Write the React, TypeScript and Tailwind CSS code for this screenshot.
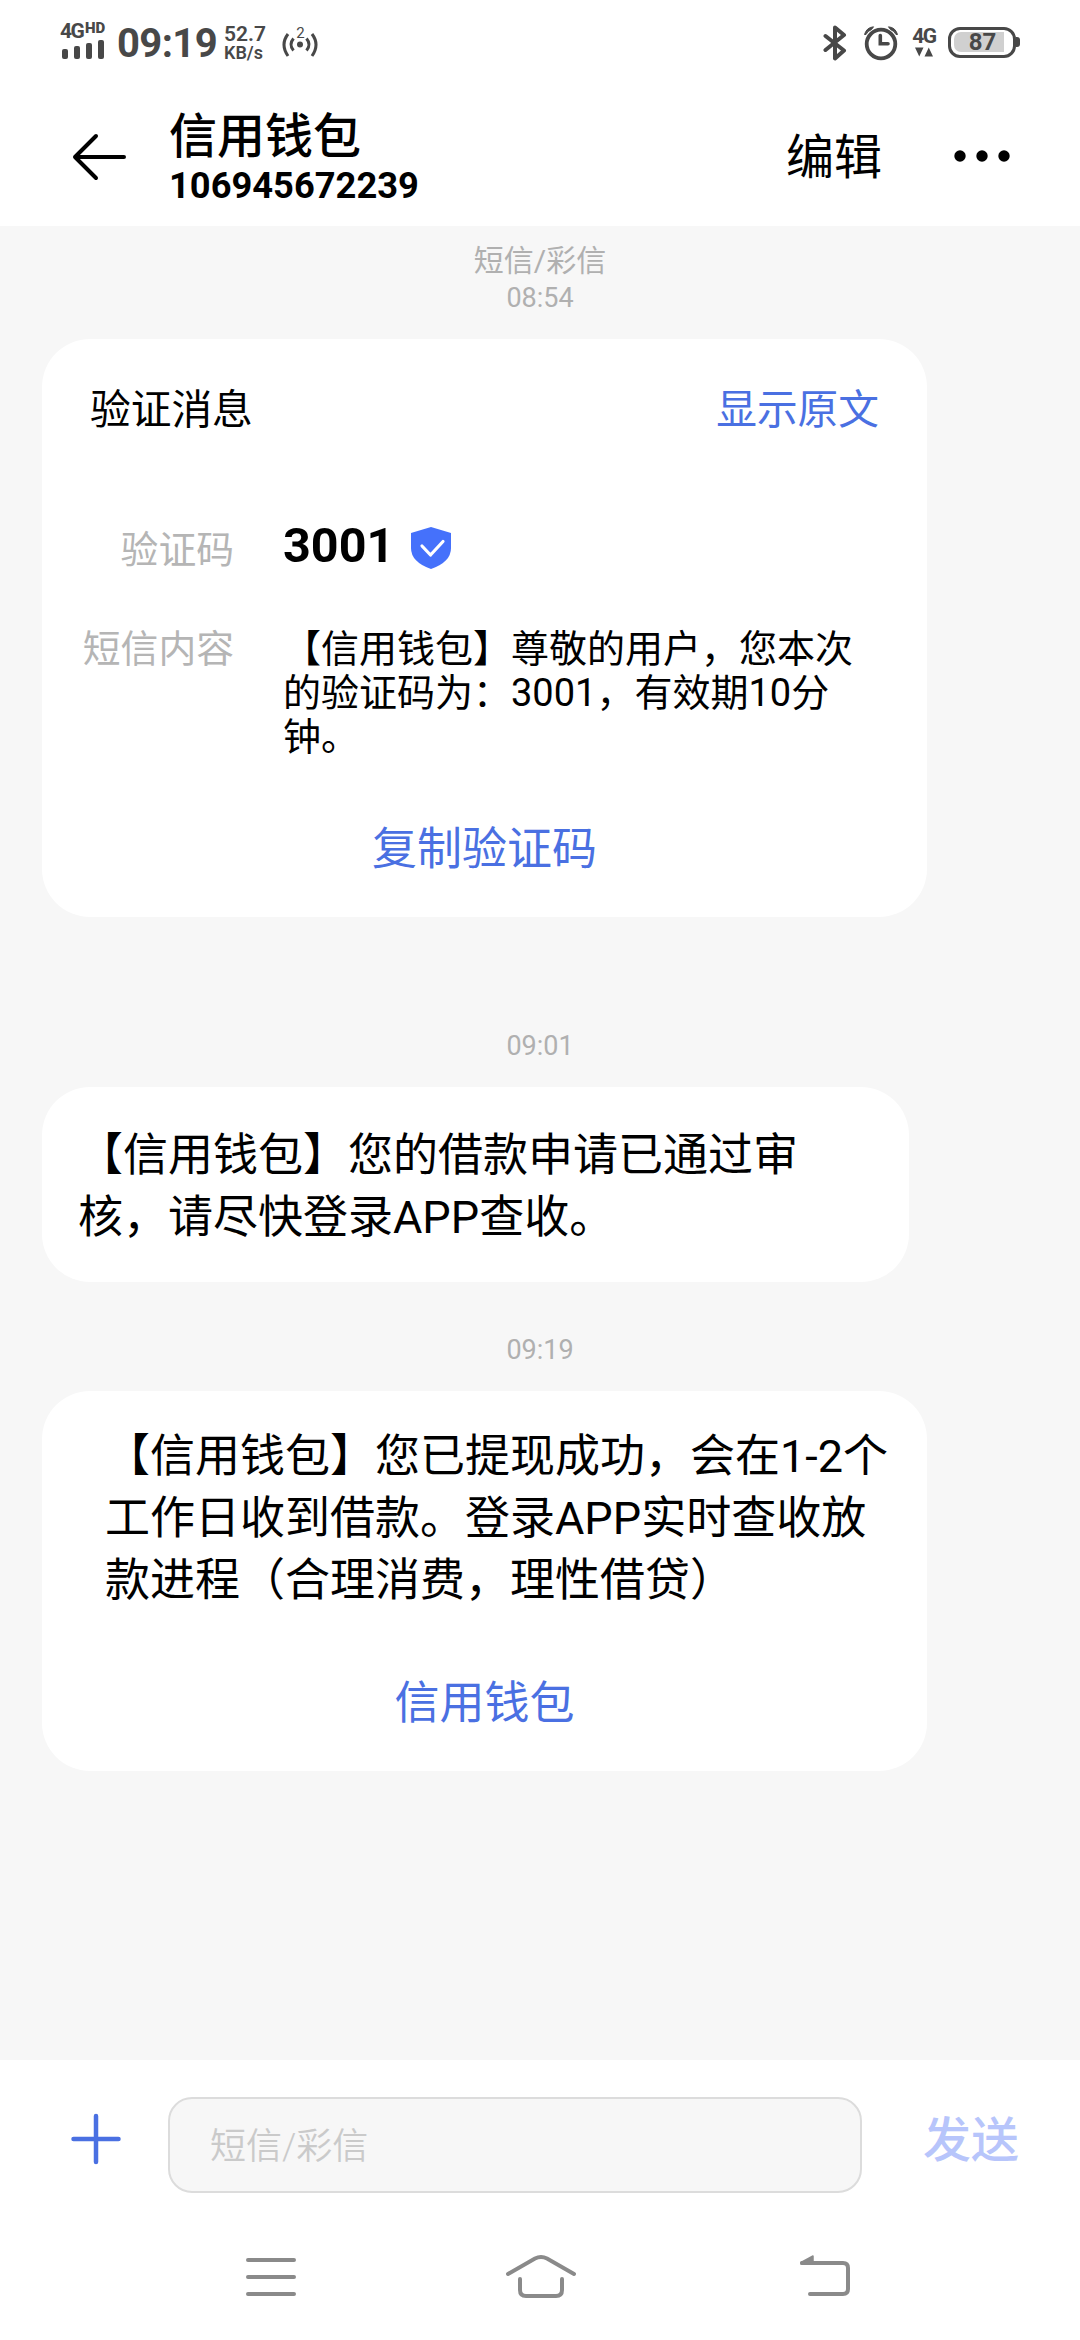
import React from 'react';

interface BubbleProps {
  lines: string[];
  className: string;
  action?: string;
}

const verification = {
  code: '3001',
  lines: ['【信用钱包】尊敬的用户，您本次', '的验证码为：3001，有效期10分', '钟。'],
};

const approved = ['【信用钱包】您的借款申请已通过审', '核，请尽快登录APP查收。'];

const withdrawn = [
  '【信用钱包】您已提现成功，会在1-2个',
  '工作日收到借款。登录APP实时查收放',
  '款进程（合理消费，理性借贷）',
];

function StatusBar() {
  return (
    <div className="flex h-[86px] items-center justify-between pl-[60px] pr-[60px] text-[#484848]">
      <div className="flex items-center">
        {/* Signal */}
        <div className="flex w-[47px] flex-col pb-[6px]">
          <div className="flex h-[17px] items-start font-bold">
            <span className="w-[25px] text-[21px] leading-[19px] tracking-[-1.5px]">4G</span>
            <span className="text-[15px] font-black leading-[13px]">HD</span>
          </div>
          <svg width="44" height="20" viewBox="0 0 44 20" className="ml-[2px]" fill="currentColor">
            <rect x="0" y="10" width="6" height="10" rx="2" />
            <rect x="12" y="7" width="6" height="13" rx="2" />
            <rect x="24" y="4" width="6" height="16" rx="2" />
            <rect x="36" y="1" width="6" height="19" rx="2" />
          </svg>
        </div>
        <span className="ml-[10px] w-[101px] pt-[2px] text-[40px] font-bold leading-[40px] tracking-[-0.6px]">09:19</span>
        <div className="ml-[6px] flex w-[56px] flex-col font-semibold">
          <span className="text-[21px] leading-[19px]">52.7</span>
          <span className="text-[18px] leading-[18px]">KB/s</span>
        </div>
        <svg width="38" height="42" viewBox="0 -4 38 42" fill="none" stroke="currentColor" strokeWidth="3" className="ml-px">
          <circle cx="19" cy="18.500" r="3" fill="currentColor" stroke="none" />
          <path d="M12.500 12.500Q7.500 18.500 12.500 24.500M25.500 12.500Q30.500 18.500 25.500 24.500" />
          <path d="M7 8Q-1 18.500 7 30M31 8Q39 18.500 31 30" />
          <text x="19.500" y="12" textAnchor="middle" fontSize="15" fill="currentColor" stroke="none">2</text>
        </svg>
      </div>

      <div className="flex items-center">
        <svg width="24" height="36" viewBox="0 0 24 36" fill="none" stroke="currentColor" strokeWidth="4" strokeLinecap="round" strokeLinejoin="round">
          <path d="M2.500 11L21 25.500L12 33.500V2.500L21 10L2.500 25" />
        </svg>
        <svg width="36" height="36" viewBox="0 0 36 36" fill="none" stroke="currentColor" className="ml-[16px]">
          <circle cx="18" cy="19" r="14.300" strokeWidth="3.800" />
          <path d="M17.300 10.500V18.800H25" strokeWidth="3.600" strokeLinecap="round" />
          <path d="M1.500 9.500Q3.500 2.500 10.500 1.800L8.500 4.500Q4.500 6 3 9.500ZM34.500 9.500Q32.500 2.500 25.500 1.800L27.500 4.500Q31.500 6 33 9.500Z" fill="currentColor" strokeWidth="1" />
        </svg>
        <div className="ml-[12px] flex w-[26px] flex-col items-center pb-[2px]">
          <span className="text-[21px] font-bold leading-[18px] tracking-[-1.5px]">4G</span>
          <svg width="18" height="10" viewBox="0 0 18 10" fill="currentColor" className="mt-[2px]">
            <path d="M0 0.500H8.500L4.250 9.500ZM9.500 9.500H18L13.750 0.500Z" />
          </svg>
        </div>
        {/* Battery */}
        <div className="ml-[11px] flex items-center pb-[2px]">
          <div className="flex h-[31px] w-[68px] rounded-[12px] border-[3px] border-[#484848] p-[2.500px]">
            <div className="flex w-[50px] items-center justify-center rounded-l-[7px] bg-[#d0d0d0] pl-[8px] text-[24px] font-bold leading-[20px]">
              87
            </div>
          </div>
          <div className="h-[10px] w-[4px] rounded-r-[3px] bg-[#484848]" />
        </div>
      </div>
    </div>
  );
}

function Header() {
  return (
    <header className="flex h-[140px] items-center pl-[72px] pr-[70px]">
      <svg width="56" height="48" viewBox="0 0 56 48" fill="none" stroke="black" strokeWidth="4" strokeLinecap="round" strokeLinejoin="round" className="mt-[2px]">
        <path d="M52 24H3M24 3L3 24L24 45" />
      </svg>
      <div className="ml-[41px] flex flex-1 flex-col pt-[5px]">
        <h1 className="text-[48px] font-medium leading-[54px]">信用钱包</h1>
        <span className="text-[36.300px] font-bold leading-[44px]">106945672239</span>
      </div>
      <button className="pt-[4px] text-[48px] leading-[60px]">编辑</button>
      <svg width="56" height="12" viewBox="0 0 56 12" className="ml-[72px]">
        <circle cx="6" cy="6" r="5.700" />
        <circle cx="28" cy="6" r="5.700" />
        <circle cx="50" cy="6" r="5.700" />
      </svg>
    </header>
  );
}

function TimeStamp({ time, className }: { time: string; className: string }) {
  return <div className={`text-center text-[27px] leading-[36px] text-[#b0b0b0] ${className}`}>{time}</div>;
}

function VerificationCard() {
  return (
    <section className="mt-[23px] ml-[42px] h-[578px] w-[885px] rounded-[48px] bg-white pt-[41px]">
      <div className="flex justify-between px-[48px] text-[40.700px] leading-[60px]">
        <span>验证消息</span>
        <button className="text-[#4a70e2]">显示原文</button>
      </div>

      <div className="mt-[82px] flex h-[56px] items-center">
        <span className="w-[192px] text-right text-[37.800px] leading-[56px] text-[#b5b5b5]">验证码</span>
        <span className="ml-[49px] pb-[8px] text-[48.500px] font-bold leading-[56px]">{verification.code}</span>
        <svg width="42" height="44" viewBox="0 0 42 44" className="mb-[4px] ml-[16px]">
          <path d="M21 1L41 7V22Q41 36 21 43Q1 36 1 22V7Z" fill="#4571fb" />
          <path d="M12 20L20.500 29L33 15.500" fill="none" stroke="white" strokeWidth="3.200" strokeLinecap="round" strokeLinejoin="round" />
        </svg>
      </div>

      <div className="mt-[49px] flex text-[38px] leading-[44px]">
        <span className="w-[192px] text-right text-[37.800px] text-[#b5b5b5]">短信内容</span>
        <div className="ml-[49px] whitespace-nowrap">
          {verification.lines.map((line) => (
            <p key={line}>{line}</p>
          ))}
        </div>
      </div>

      <button className="mt-[61px] block w-full text-center text-[45px] leading-[60px] text-[#4a70e2]">复制验证码</button>
    </section>
  );
}

function Bubble({ lines, className, action }: BubbleProps) {
  return (
    <section className={`mt-[23px] ml-[42px] rounded-[48px] bg-white ${className}`}>
      <div className="whitespace-nowrap text-[45px] leading-[62px]">
        {lines.map((line) => (
          <p key={line}>{line}</p>
        ))}
      </div>
      {action && (
        <button className="mt-[62px] block w-[885px] -ml-[63px] text-center text-[45px] leading-[60px] text-[#4a70e2]">{action}</button>
      )}
    </section>
  );
}

function Composer() {
  return (
    <div className="flex h-[133px] items-end pl-[70px]">
      <svg width="52" height="52" viewBox="0 0 52 52" fill="none" stroke="#4a70e2" strokeWidth="4.500" strokeLinecap="round" className="mb-[28px]">
        <path d="M26 3V49M3.500 26H48.500" />
      </svg>
      <div className="ml-[46px] flex h-[96px] w-[694px] items-center rounded-[24px] border-2 border-[#dcdcdc] bg-[#f7f7f7] pl-[40px] pt-[4px] text-[36px] font-[350] text-[#cacaca]">
        短信/彩信
      </div>
      <button className="mb-[22px] ml-[61px] text-[48px] font-medium leading-[60px] text-[#b7c5fb]">发送</button>
    </div>
  );
}

function NavBar() {
  return (
    <nav className="flex h-[147px] items-start pl-[244px] pt-[59px]">
      <svg width="54" height="50" viewBox="0 0 54 50" fill="none" stroke="#8a8a8a" strokeWidth="4" strokeLinecap="round">
        <path d="M4 8H50M4 25H50M4 42H50" />
      </svg>
      <svg width="74" height="50" viewBox="0 0 74 50" fill="none" stroke="#8a8a8a" strokeWidth="4" strokeLinecap="round" className="ml-[206px]">
        <path d="M4 22L31 6.500Q37 3.500 43 6.500L70 22" />
        <path d="M16 27V38Q16 44 22 44H52Q58 44 58 38V27" />
      </svg>
      <svg width="56" height="50" viewBox="0 0 56 50" fill="none" stroke="#8a8a8a" strokeWidth="4" strokeLinecap="round" className="ml-[219px]">
        <path d="M5 11H46Q51 11 51 16V37Q51 42 46 42H13" />
        <path d="M4 10.500L16 4V12H4Z" fill="#8a8a8a" strokeWidth="1.500" strokeLinejoin="round" />
      </svg>
    </nav>
  );
}

export default function App() {
  return (
    <div lang="zh-CN" className="flex h-[2340px] w-[1080px] flex-col overflow-hidden bg-white font-[Roboto,'Noto_Sans_CJK_SC',sans-serif] text-black">
      <StatusBar />
      <Header />
      <main className="h-[1834px] bg-[#f7f7f7] pt-[16px]">
        <div className="text-center text-[30px] leading-[38px] text-[#b0b0b0]">短信/彩信</div>
        <TimeStamp time="08:54" className="" />
        <VerificationCard />
        <TimeStamp time="09:01" className="mt-[111px]" />
        <Bubble lines={approved} className="h-[195px] w-[867px] pl-[36px] pt-[38px]" />
        <TimeStamp time="09:19" className="mt-[50px]" />
        <Bubble lines={withdrawn} className="h-[380px] w-[885px] pl-[63px] pt-[35px]" action="信用钱包" />
      </main>
      <Composer />
      <NavBar />
    </div>
  );
}
